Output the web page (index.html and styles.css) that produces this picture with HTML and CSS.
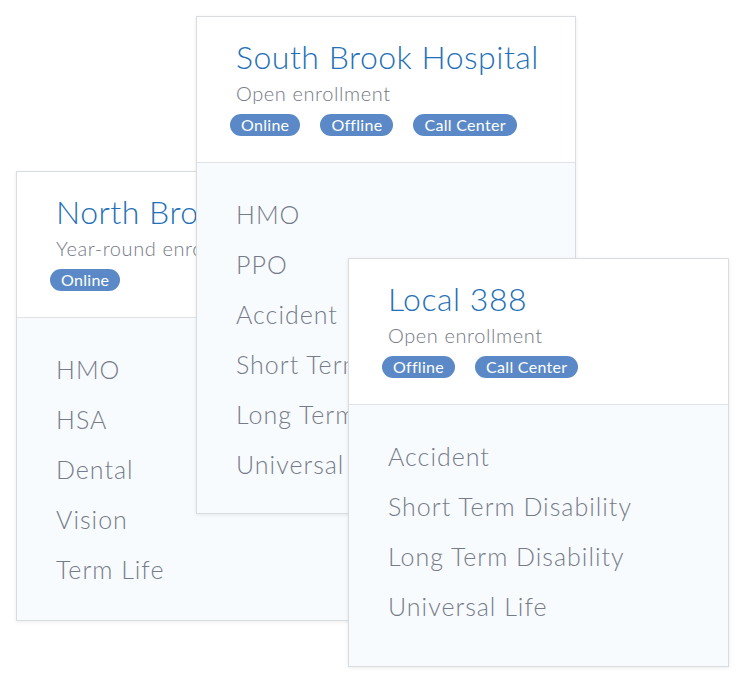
FILE: index.html
```html
<!DOCTYPE html>
<html>
<head>
<meta charset="utf-8">
<link rel="stylesheet" href="styles.css">
</head>
<body>
<div class="canvas">
  <div class="card card-north">
    <div class="card-head">
      <div class="title">North Brook Hospital</div>
      <div class="subtitle">Year-round enrollment</div>
      <div class="pills"><span class="pill">Online</span></div>
    </div>
    <ul class="plans plans-north">
      <li>HMO</li><li>HSA</li><li>Dental</li><li>Vision</li><li>Term Life</li>
    </ul>
  </div>
  <div class="card card-south">
    <div class="card-head">
      <div class="title">South Brook Hospital</div>
      <div class="subtitle">Open enrollment</div>
      <div class="pills"><span class="pill">Online</span><span class="pill">Offline</span><span class="pill">Call Center</span></div>
    </div>
    <ul class="plans">
      <li>HMO</li><li>PPO</li><li>Accident</li><li>Short Term Disability</li><li>Long Term Disability</li><li>Universal Life</li>
    </ul>
  </div>
  <div class="card card-local">
    <div class="card-head">
      <div class="title">Local 388</div>
      <div class="subtitle">Open enrollment</div>
      <div class="pills"><span class="pill">Offline</span><span class="pill">Call Center</span></div>
    </div>
    <ul class="plans plans-local">
      <li>Accident</li><li>Short Term Disability</li><li>Long Term Disability</li><li>Universal Life</li>
    </ul>
  </div>
</div>
</body>
</html>
```
FILE: styles.css
```css
html, body {
  margin: 0;
  padding: 0;
  background: #ffffff;
}
body {
  font-family: Lato, "Open Sans", sans-serif;
}
.canvas {
  position: relative;
  width: 745px;
  height: 685px;
}
.card {
  position: absolute;
  width: 380px;
  box-sizing: border-box;
  background: #ffffff;
  border: 1px solid #d9dde1;
  box-shadow: 0 1px 4px rgba(0, 0, 0, 0.08);
  overflow: hidden;
}
.card-north { left: 16px; top: 171px; z-index: 1; }
.card-south { left: 196px; top: 16px; z-index: 2; }
.card-local { left: 348px; top: 258px; width: 381px; z-index: 3; }
.card-head {
  padding: 20px 20px 26px 39px;
  border-bottom: 1px solid #dfe2e6;
  white-space: nowrap;
}
.title {
  font-size: 32px;
  line-height: 40px;
  font-weight: 300;
  letter-spacing: 0.5px;
  color: #2470b8;
}
.subtitle {
  margin-top: 3px;
  font-size: 20px;
  line-height: 26px;
  font-weight: 300;
  letter-spacing: 0.6px;
  color: #747886;
}
.pills {
  display: flex;
  gap: 20px;
  margin-top: 8px;
  margin-left: -6px;
}
.pill {
  display: inline-block;
  height: 22px;
  line-height: 22px;
  padding: 0 11px;
  border-radius: 11px;
  background: #5b89c7;
  color: #ffffff;
  font-size: 16px;
  font-weight: 400;
  letter-spacing: 0.3px;
}
.plans {
  list-style: none;
  margin: 0;
  padding: 26px 0 24px 39px;
  background: #f8fbfd;
  white-space: nowrap;
}
.plans-north { padding-bottom: 26px; }
.plans-local { padding-bottom: 35px; }
.plans li {
  font-size: 25px;
  line-height: 50px;
  font-weight: 300;
  letter-spacing: 1px;
  color: #767b8b;
}
```
